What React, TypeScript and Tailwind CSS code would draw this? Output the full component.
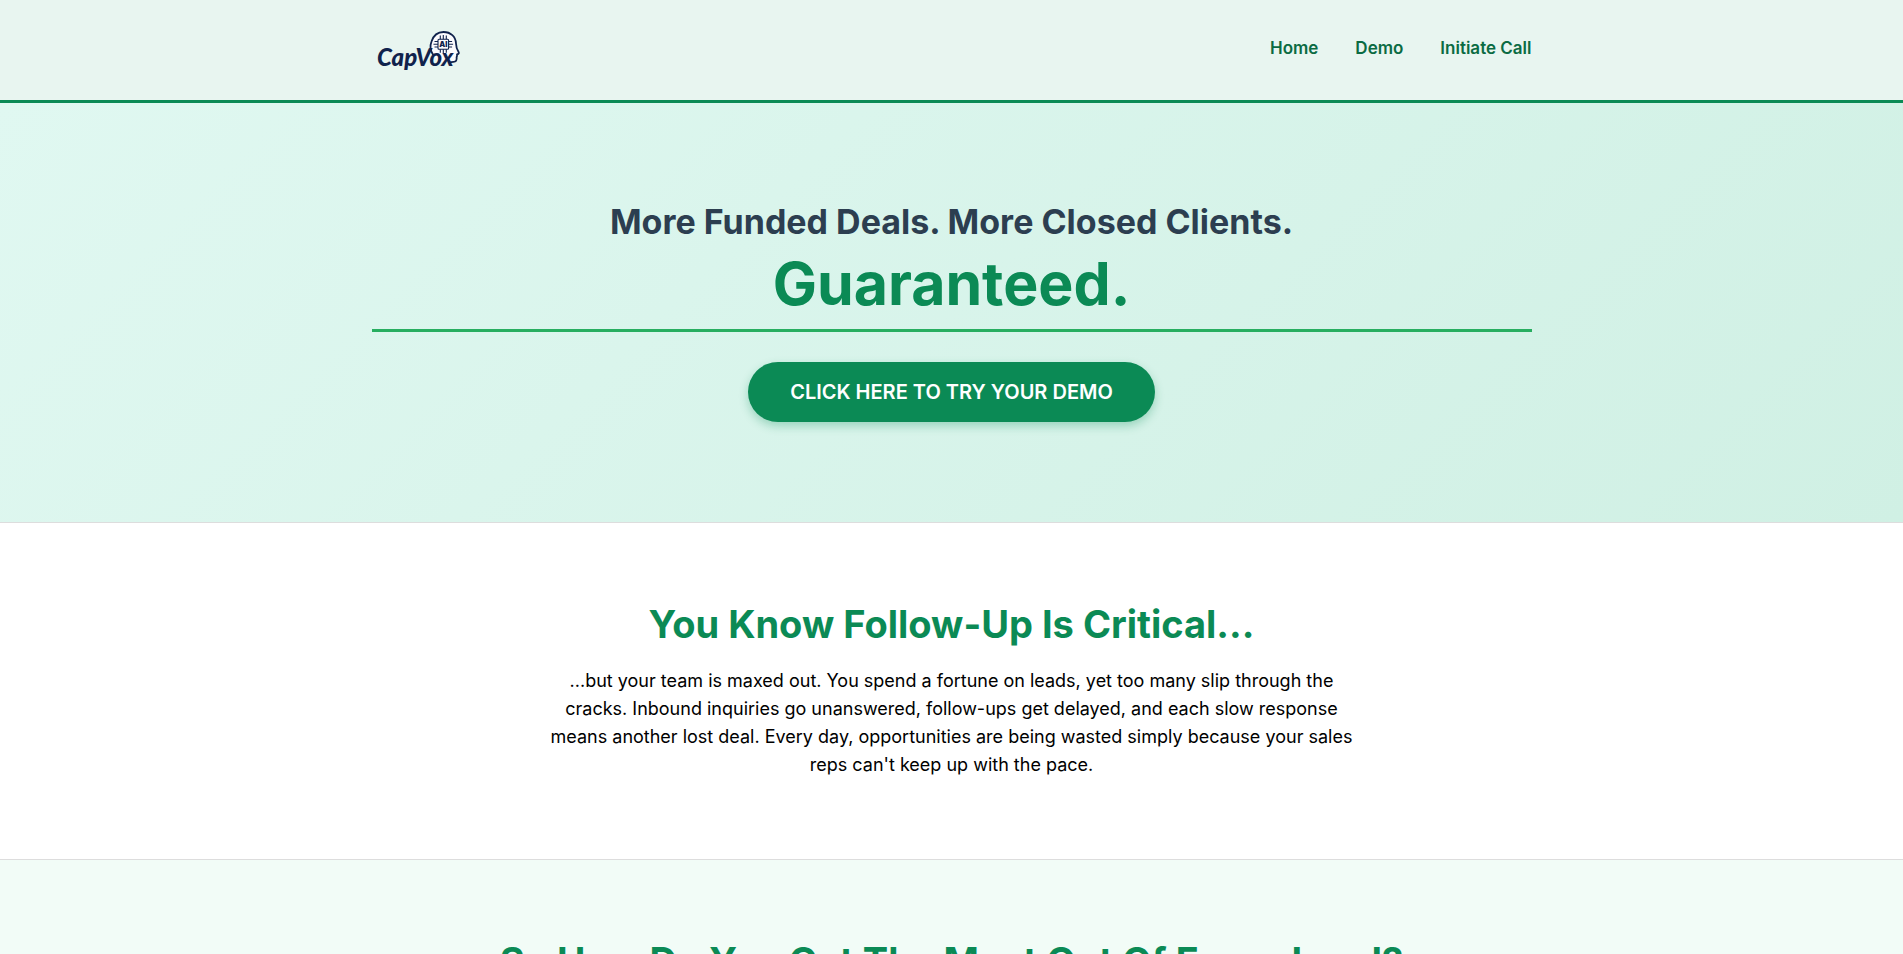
const NAV = [
  { label: "Home", href: "#home" },
  { label: "Demo", href: "#demo" },
  { label: "Initiate Call", href: "#call" },
];

function Logo() {
  return (
    <svg viewBox="0 0 90 60" className="h-[60px] w-[90px]" role="img" aria-label="CapVox">
      <path
        d="M62 36 C58.500 32 57.800 26 59.500 21.500 C61.500 15.500 66 12 71.500 12 C78.500 12 83.800 16.500 84 23.500 C84 27 84.300 28.500 86.800 32.500 C87.200 33.600 86 34.200 85 34.400 C85.400 35.600 84.800 36.400 84.600 37.200 C85 40.500 84 41.800 81.500 41.800 L76 42.300 L66 42.300 Z"
        fill="#fbfafd"
      />
      <path
        d="M61 34.500 C58.500 31 57.800 26 59.500 21.500 C61.500 15.500 66 12 71.500 12 C78.500 12 83.800 16.500 84 23.500 C84 27 84.300 28.500 86.800 32.500 C87.200 33.600 86 34.200 85 34.400 C85.400 35.600 84.800 36.400 84.600 37.200 C85 40.500 84 41.800 81.500 41.800 L77 42.300"
        fill="none"
        stroke="#10224c"
        strokeWidth="1.800"
        strokeLinejoin="round"
        strokeLinecap="round"
      />
      <g stroke="#10224c" strokeWidth="1.100" fill="none">
        <rect x="66" y="19.200" width="10.600" height="10" rx="1" />
        <path d="M68.300 15.500v3.700M71.300 15v4.200M74.300 15.500v3.700M68.300 29.200v3.600M71.300 29.200v4M74.300 29.200v3.600M62.500 21.500h3.500M61.500 24.200h4.500M62.500 27h3.500M76.600 21.500h3.500M76.600 24.200h4.500M76.600 27h3.500" />
      </g>
      <text x="71.300" y="27" textAnchor="middle" fontSize="7.500" fontWeight="900" fill="#10224c" fontFamily="Inter, sans-serif">AI</text>
      <text x="5" y="45.500" fontSize="24" fontWeight="900" fontStyle="italic" fill="#10224c" fontFamily="Lato, sans-serif">CapVox</text>
    </svg>
  );
}

export default function App() {
  return (
    <div className="h-screen overflow-hidden bg-white font-[Inter,sans-serif] text-black">
      <header className="border-b-[3px] border-[#0b8a55] bg-[#e8f5f0]">
        <div className="mx-auto flex max-w-[1160px] items-start justify-between py-5">
          <a href="#home"><Logo /></a>
          <nav className="flex gap-[37px] pt-4 text-[17px] leading-6 font-semibold text-[#0b6b43]">
            {NAV.map((item) => <a key={item.label} href={item.href}>{item.label}</a>)}
          </nav>
        </div>
      </header>
      <main>
        <section className="border-b border-[#dddddd] bg-linear-135 from-[#e0f8f1] to-[#d0f0e4] py-[100px]">
          <div className="mx-auto max-w-[1160px] text-center">
            <h1 className="border-b-[3px] border-[#27ae60] pb-[10px] font-bold text-[#2c3e50]">
              <span className="block text-[34px] leading-[38px]">More Funded Deals. More Closed Clients.</span>
              <span className="block pt-2 text-[59px] leading-[70px] text-[#0b8a55]">Guaranteed.</span>
            </h1>
            <a href="#demo" className="mt-[30px] inline-flex h-[60px] items-center rounded-full bg-[#0b8a55] px-[42px] text-xl font-semibold text-white shadow-[0_4px_10px_rgba(11,138,85,0.3)]">CLICK HERE TO TRY YOUR DEMO</a>
          </div>
        </section>
        <section className="border-b border-[#dddddd] bg-white py-20 text-center">
          <h2 className="text-[38px] leading-[43px] font-bold text-[#0b8a55]">You Know Follow-Up Is Critical...</h2>
          <p className="mx-auto mt-[21px] max-w-[815px] text-lg leading-7">
            ...but your team is maxed out. You spend a fortune on leads, yet too many slip through the cracks. Inbound inquiries go unanswered, follow-ups get delayed, and each slow response means another lost deal. Every day, opportunities are being wasted simply because your sales reps can't keep up with the pace.
          </p>
        </section>
        <section className="bg-[#f2fcf7] py-20 text-center">
          <h2 className="text-[38px] leading-[43px] font-bold text-[#0b8a55]">So How Do You Get The Most Out Of Every Lead?</h2>
        </section>
      </main>
    </div>
  );
}
